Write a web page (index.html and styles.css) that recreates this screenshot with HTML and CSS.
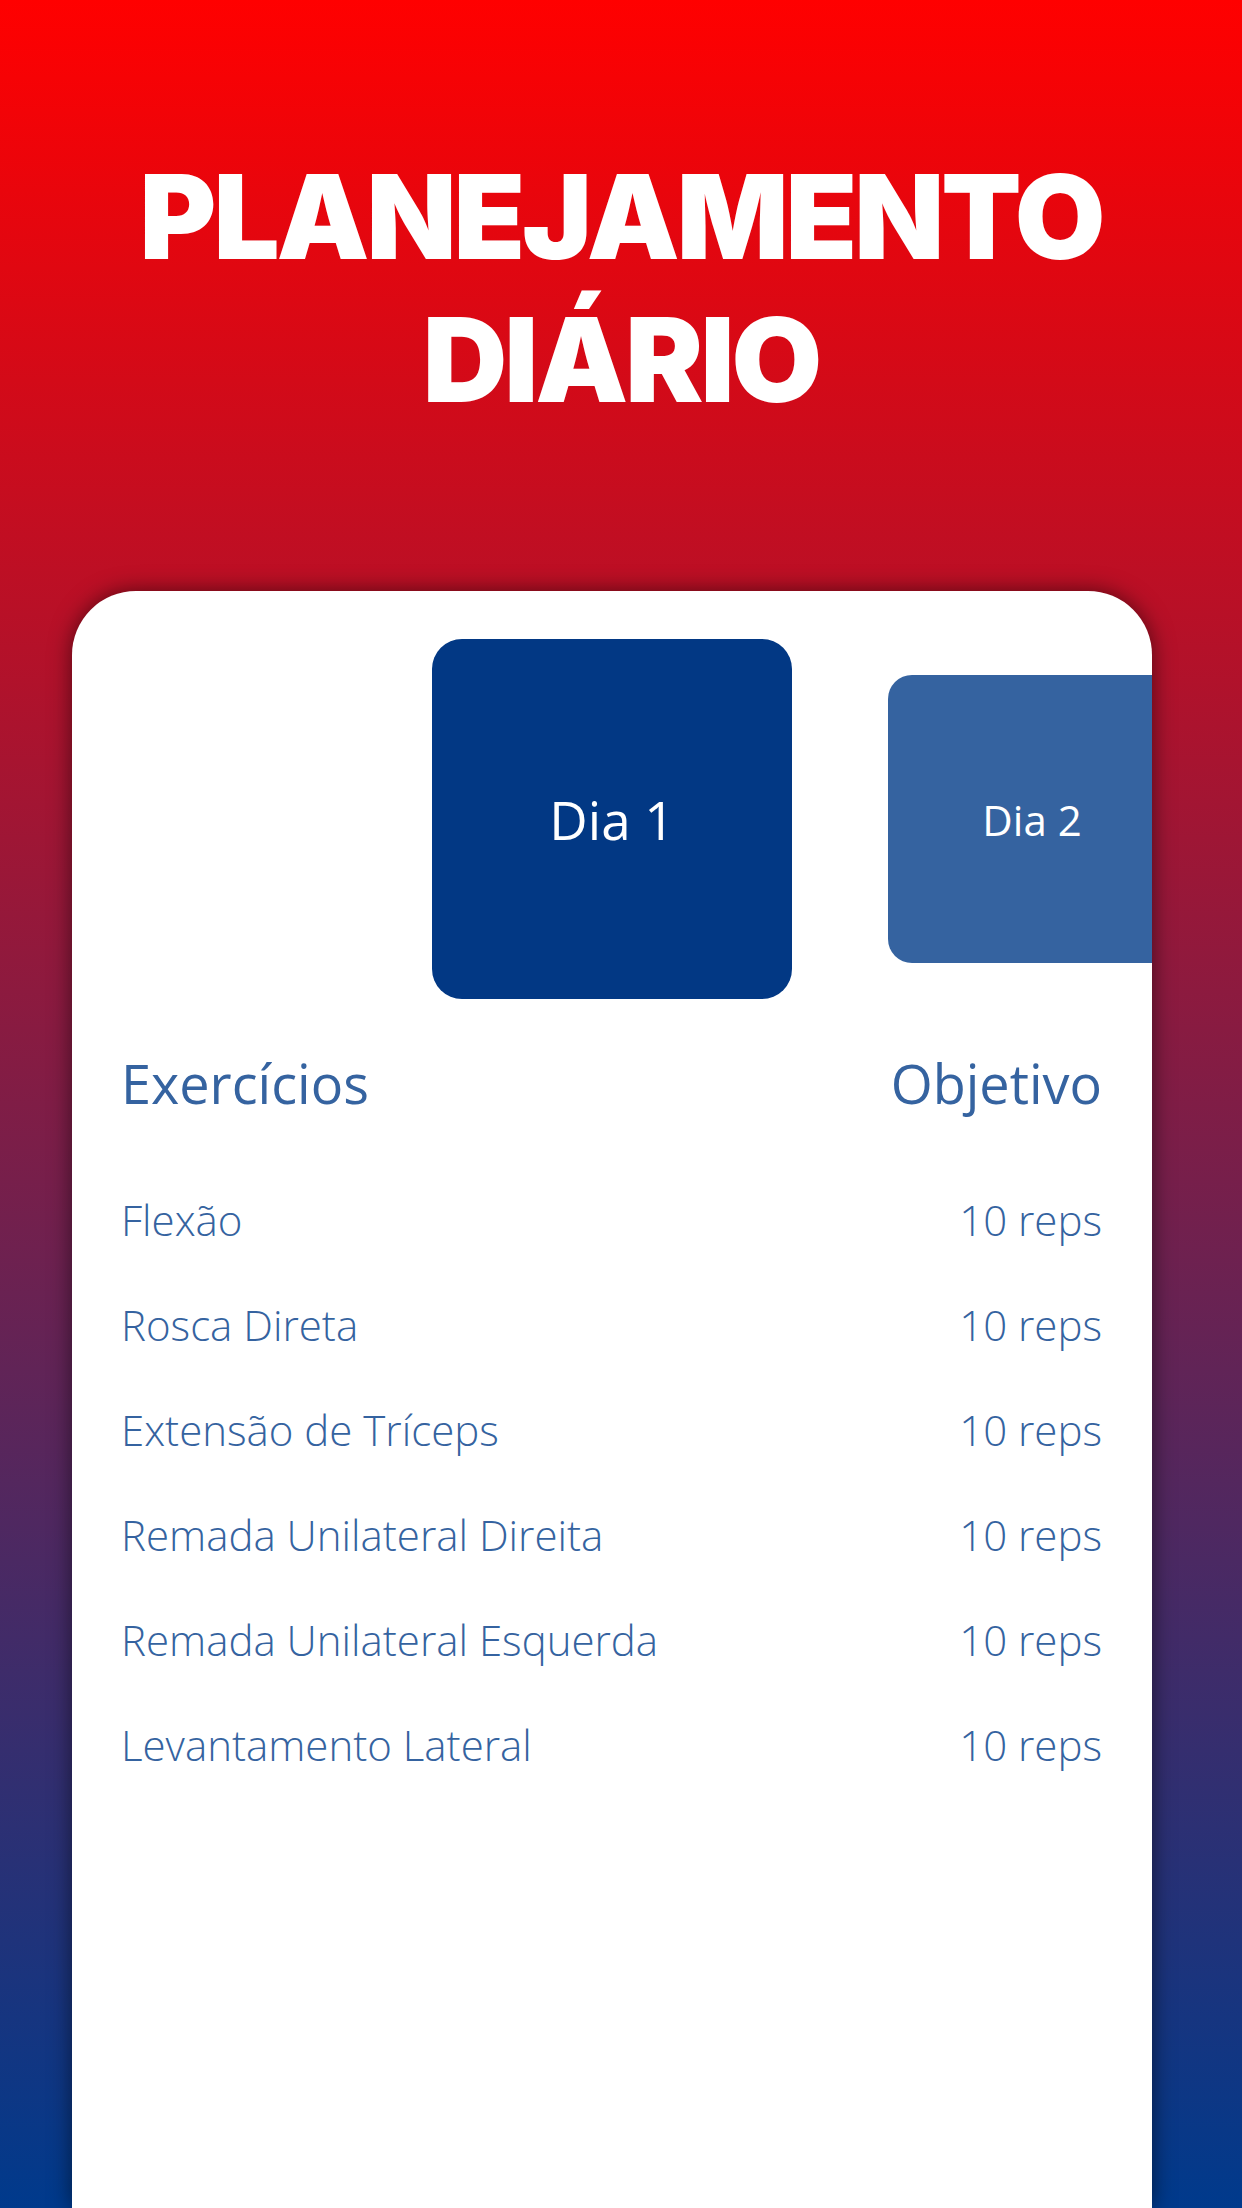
FILE: index.html
```html
<!DOCTYPE html>
<html lang="pt-BR">
<head>
    <meta charset="UTF-8">
    <meta name="viewport" content="width=device-width, initial-scale=1.0">
    <title>Planejamento Diário</title>
    <link rel="stylesheet" href="styles.css">
</head>
<body>
    <div class="screen">
        <h1 class="title">PLANEJAMENTO<br>DIÁRIO</h1>

        <div class="card">
            <div class="days">
                <div class="day day-active">Dia 1</div>
                <div class="day day-next">Dia 2</div>
            </div>

            <div class="plan">
                <div class="plan-head">
                    <span>Exercícios</span>
                    <span>Objetivo</span>
                </div>
                <div class="plan-row"><span>Flexão</span><span>10 reps</span></div>
                <div class="plan-row"><span>Rosca Direta</span><span>10 reps</span></div>
                <div class="plan-row"><span>Extensão de Tríceps</span><span>10 reps</span></div>
                <div class="plan-row"><span>Remada Unilateral Direita</span><span>10 reps</span></div>
                <div class="plan-row"><span>Remada Unilateral Esquerda</span><span>10 reps</span></div>
                <div class="plan-row"><span>Levantamento Lateral</span><span>10 reps</span></div>
            </div>
        </div>
    </div>
</body>
</html>
```

FILE: styles.css
```css
html, body {
    margin: 0;
    padding: 0;
}
body {
    font-family: 'Open Sans', 'Noto Sans', sans-serif;
    background: linear-gradient(to bottom, #ff0000 0%, #003a8c 100%);
    min-height: 2208px;
    overflow: hidden;
}
.screen {
    width: 1242px;
    height: 2208px;
    display: flex;
    flex-direction: column;
}
.title {
    margin: 145px 0 0;
    font-family: 'Inter', 'Roboto', sans-serif;
    font-weight: 900;
    font-size: 117px;
    line-height: 143px;
    letter-spacing: -3px;
    color: #fff;
    text-align: center;
}
.card {
    margin: 160px 0 0 72px;
    width: 1080px;
    flex: 1;
    background: #fff;
    border-radius: 64px 64px 0 0;
    box-shadow: 0 0 22px rgba(0, 0, 0, 0.55);
    overflow: hidden;
}
.days {
    display: flex;
    align-items: center;
    padding: 48px 0 0 360px;
    height: 360px;
}
.day {
    flex-shrink: 0;
    display: flex;
    align-items: center;
    justify-content: center;
    color: #fff;
}
.day-active {
    width: 360px;
    height: 360px;
    border-radius: 30px;
    background: #023884;
    font-size: 53px;
}
.day-next {
    margin-left: 96px;
    width: 288px;
    height: 288px;
    border-radius: 24px;
    background: #3563a0;
    font-size: 42px;
}
.plan {
    padding: 44px 50px 0 49px;
    color: #3563a0;
}
.plan-head {
    display: flex;
    justify-content: space-between;
    font-size: 54px;
    line-height: 80px;
    margin-bottom: 44px;
}
.plan-row {
    display: flex;
    justify-content: space-between;
    font-size: 42px;
    font-weight: 300;
    line-height: 105px;
}
```
